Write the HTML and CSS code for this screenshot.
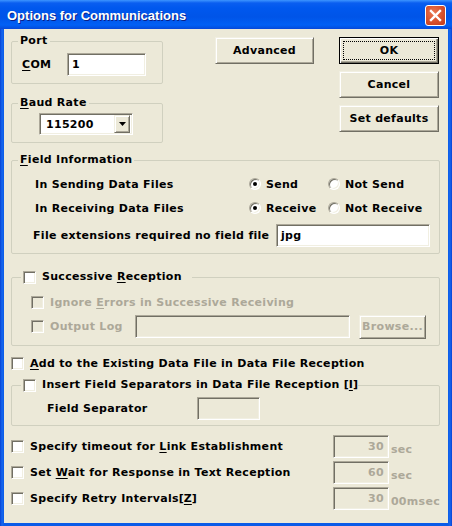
FILE: index.html
```html
<!DOCTYPE html>
<html lang="en">
<head>
    <meta charset="UTF-8">
    <title>Options for Communications</title>
    <link rel="stylesheet" href="styles.css">
</head>
<body>
    <div class="window">
        <div class="titlebar">
            <span class="title">Options for Communications</span>
            <span class="close">
                <svg width="13" height="13" viewBox="0 0 13 13"><path d="M2 2L11 11M11 2L2 11" stroke="#fff" stroke-width="2.4" stroke-linecap="square"/></svg>
            </span>
        </div>

        <div class="client">
            <div class="top">
                <div class="left-col">
                    <fieldset class="group port">
                        <legend>Port</legend>
                        <div class="com-row">
                            <span class="com-label"><u>C</u>OM</span>
                            <div class="edit com-edit">1</div>
                        </div>
                    </fieldset>
                    <fieldset class="group baud">
                        <legend><u>B</u>aud Rate</legend>
                        <div class="combo">
                            <span class="combo-text">115200</span>
                            <span class="drop">
                                <svg width="7" height="4" viewBox="0 0 7 4"><path d="M0 0H7L3.5 4Z" fill="#000"/></svg>
                            </span>
                        </div>
                    </fieldset>
                </div>
                <button class="btn adv">Advanced</button>
                <div class="btn-col">
                    <button class="btn default">OK</button>
                    <button class="btn">Cancel</button>
                    <button class="btn">Set defaults</button>
                </div>
            </div>

            <fieldset class="group field-info">
                <legend><u>F</u>ield Information</legend>
                <div class="radio-row">
                    <span>In Sending Data Files</span>
                    <span class="opt"><span class="radio checked"></span><span>Send</span></span>
                    <span class="opt"><span class="radio"></span><span>Not Send</span></span>
                </div>
                <div class="radio-row">
                    <span>In Receiving Data Files</span>
                    <span class="opt"><span class="radio checked"></span><span>Receive</span></span>
                    <span class="opt"><span class="radio"></span><span>Not Receive</span></span>
                </div>
                <div class="ext-row">
                    <span>File extensions required no field file</span>
                    <div class="edit ext-edit">jpg</div>
                </div>
            </fieldset>

            <fieldset class="group successive">
                <legend class="chk-legend"><span class="check"></span><span>Successive <u>R</u>eception</span></legend>
                <div class="sub-row disabled">
                    <span class="check off"></span><span>Ignore <u>E</u>rrors in Successive Receiving</span>
                </div>
                <div class="log-row disabled">
                    <span class="chk-label"><span class="check off"></span><span>Output Log</span></span>
                    <div class="edit off log-edit"></div>
                    <button class="btn browse">Browse...</button>
                </div>
            </fieldset>

            <div class="add-row">
                <span class="check"></span><span><u>A</u>dd to the Existing Data File in Data File Reception</span>
            </div>

            <fieldset class="group insert">
                <legend class="chk-legend"><span class="check"></span><span>Insert Field Separators in Data File Reception <span class="key">[<u>I</u>]</span></span></legend>
                <div class="sep-row">
                    <span>Field Separator</span>
                    <div class="edit off sep-edit"></div>
                </div>
            </fieldset>

            <div class="opt-rows">
                <div class="opt-row">
                    <span class="chk-label"><span class="check"></span><span>Specify timeout for <u>L</u>ink Establishment</span></span>
                    <div class="edit off num">30</div>
                    <span class="unit">sec</span>
                </div>
                <div class="opt-row">
                    <span class="chk-label"><span class="check"></span><span>Set <u>W</u>ait for Response in Text Reception</span></span>
                    <div class="edit off num">60</div>
                    <span class="unit">sec</span>
                </div>
                <div class="opt-row">
                    <span class="chk-label"><span class="check"></span><span>Specify Retry Intervals<span class="key">[<u>Z</u>]</span></span></span>
                    <div class="edit off num">30</div>
                    <span class="unit">00msec</span>
                </div>
            </div>
        </div>
    </div>
</body>
</html>
```

FILE: styles.css
```css
* {
box-sizing: border-box;
}

body {
margin: 0;
font-family: "DejaVu Sans", sans-serif;
font-size: 11px;
font-weight: bold;
letter-spacing: 0.3px;
color: #000;
}

u {
text-decoration: underline;
text-underline-offset: 2px;
}

.window {
width: 452px;
height: 526px;
display: flex;
flex-direction: column;
overflow: hidden;
background: linear-gradient(90deg, #0842d4 0, #1667ee 2px, #0a5be8 4px, #0a5be8 448px, #1667ee 450px, #0842d4 452px);
}

/* title bar */
.titlebar {
flex: none;
height: 29px;
display: flex;
align-items: center;
padding: 1px 6px 0 7px;
background: linear-gradient(#3d95ff 0, #0a5ef0 3px, #0058ee 8px, #0054e8 17px, #0160f5 25px, #0350e0 28px, #0a45d8 29px);
}

.title {
flex: 1;
color: #fff;
font-family: "Liberation Sans", Arial, sans-serif;
font-size: 13px;
letter-spacing: 0;
text-shadow: 1px 1px #0b1f86;
}

.close {
width: 21px;
height: 21px;
border: 1px solid #fff;
border-radius: 3px;
display: flex;
align-items: center;
justify-content: center;
background: radial-gradient(circle at 40% 35%, #ea7a56 0, #d9532e 50%, #c2391a 100%);
}

/* client area */
.client {
flex: 1;
margin: 0 4px 3px 4px;
background: #ece9d8;
padding: 0 8px 0 7px;
}

.top {
display: flex;
align-items: flex-start;
}

.left-col {
width: 152px;
}

.group {
margin: 0;
padding: 0;
min-width: 0;
border: 1px solid #d0d0bf;
border-radius: 2px;
}

.group legend {
margin-left: 6px;
padding: 0 2px;
height: 14px;
line-height: 14px;
}

.port {
margin-top: 5px;
}

.com-row {
display: flex;
align-items: center;
padding: 5px 0 7px 10px;
}

.com-label {
width: 45px;
}

.edit {
height: 23px;
background: #fff;
border: 1px solid;
border-color: #aca899 #fff #fff #aca899;
box-shadow: inset 1px 1px #716f64, inset -1px -1px #f1efe2;
padding: 4px 4px 0 4px;
}

.edit.off {
background: #ece9d8;
color: #aca899;
}

.com-edit {
width: 79px;
}

.baud {
margin-top: 12px;
}

.combo {
width: 94px;
height: 22px;
margin: 3px 0 7px 27px;
display: flex;
align-items: center;
background: #fff;
border: 1px solid;
border-color: #aca899 #fff #fff #aca899;
box-shadow: inset 1px 1px #716f64, inset -1px -1px #f1efe2;
padding: 2px;
}

.combo-text {
flex: 1;
padding-left: 4px;
}

.drop {
width: 16px;
height: 18px;
display: flex;
align-items: center;
justify-content: center;
background: #ece9d8;
border: 1px solid;
border-color: #f1efe2 #716f64 #716f64 #f1efe2;
box-shadow: inset 1px 1px #fff, inset -1px -1px #aca899;
}

/* buttons */
.btn {
font: inherit;
letter-spacing: inherit;
color: #000;
background: #ece9d8;
border: 1px solid;
border-color: #f1efe2 #716f64 #716f64 #f1efe2;
box-shadow: inset 1px 1px #fff, inset -1px -1px #aca899;
padding: 0;
}

.adv {
width: 99px;
height: 27px;
margin: 8px 0 0 52px;
}

.btn-col {
display: flex;
flex-direction: column;
gap: 7px;
margin: 8px 0 0 25px;
}

.btn-col .btn {
width: 100px;
height: 27px;
}

.btn.default {
position: relative;
border-color: #000;
box-shadow: inset 1px 1px #fff, inset -1px -1px #716f64, inset -2px -2px #aca899;
}

.btn.default::after {
content: "";
position: absolute;
top: 3px;
left: 3px;
right: 3px;
bottom: 3px;
border: 1px dotted #000;
}

/* field information */
.field-info {
margin-top: 10px;
padding-bottom: 6px;
}

.radio-row {
display: grid;
grid-template-columns: 214px 79px auto;
align-items: center;
height: 24px;
padding-left: 23px;
}

.radio-row:first-of-type {
margin-top: 5px;
}

.opt {
display: flex;
align-items: center;
gap: 5px;
}

.radio {
width: 12px;
height: 12px;
border-radius: 50%;
background: #fff;
border: 1px solid;
border-color: #aca899 #fff #fff #aca899;
box-shadow: inset 1px 1px #716f64, inset -1px -1px #f1efe2;
display: flex;
align-items: center;
justify-content: center;
}

.radio.checked::after {
content: "";
width: 4px;
height: 4px;
border-radius: 50%;
background: #000;
}

.ext-row {
display: flex;
align-items: center;
margin-top: 4px;
padding-left: 21px;
}

.ext-row span {
width: 243px;
}

.ext-edit {
width: 154px;
}

/* checkboxes */
.check {
flex: none;
width: 13px;
height: 13px;
background: #fff;
border: 1px solid;
border-color: #aca899 #fff #fff #aca899;
box-shadow: inset 1px 1px #716f64, inset -1px -1px #f1efe2;
}

.check.off {
background: #ece9d8;
}

.group .chk-legend {
margin-left: 9px;
padding: 0 10px 0 2px;
display: flex;
align-items: center;
gap: 6px;
}

.insert .chk-legend {
padding-right: 0;
}

.key {
letter-spacing: 0;
}

.disabled {
color: #aca899;
}

.successive {
margin-top: 16px;
padding: 6px 0 6px 0;
}

.sub-row {
display: flex;
align-items: center;
gap: 6px;
height: 24px;
padding-left: 19px;
}

.log-row {
display: flex;
align-items: center;
height: 25px;
padding-left: 19px;
}

.log-row .chk-label {
width: 104px;
}

.chk-label {
display: flex;
align-items: center;
gap: 6px;
}

.log-edit {
width: 215px;
}

.btn.browse {
width: 67px;
height: 24px;
margin-left: 9px;
color: #aca899;
}

.add-row {
display: flex;
align-items: center;
gap: 6px;
height: 20px;
margin-top: 7px;
}

.insert {
margin-top: 5px;
padding: 5px 0 5px 0;
}

.sep-row {
display: flex;
align-items: center;
padding-left: 35px;
}

.sep-row span {
width: 150px;
}

.sep-edit {
width: 63px;
}

.opt-rows {
display: flex;
flex-direction: column;
gap: 3px;
margin-top: 9px;
}

.opt-row {
display: flex;
align-items: center;
}

.opt-row .chk-label {
width: 322px;
}

.num {
width: 56px;
text-align: right;
}

.unit {
color: #aca899;
margin-left: 2px;
padding-top: 6px;
}
```
